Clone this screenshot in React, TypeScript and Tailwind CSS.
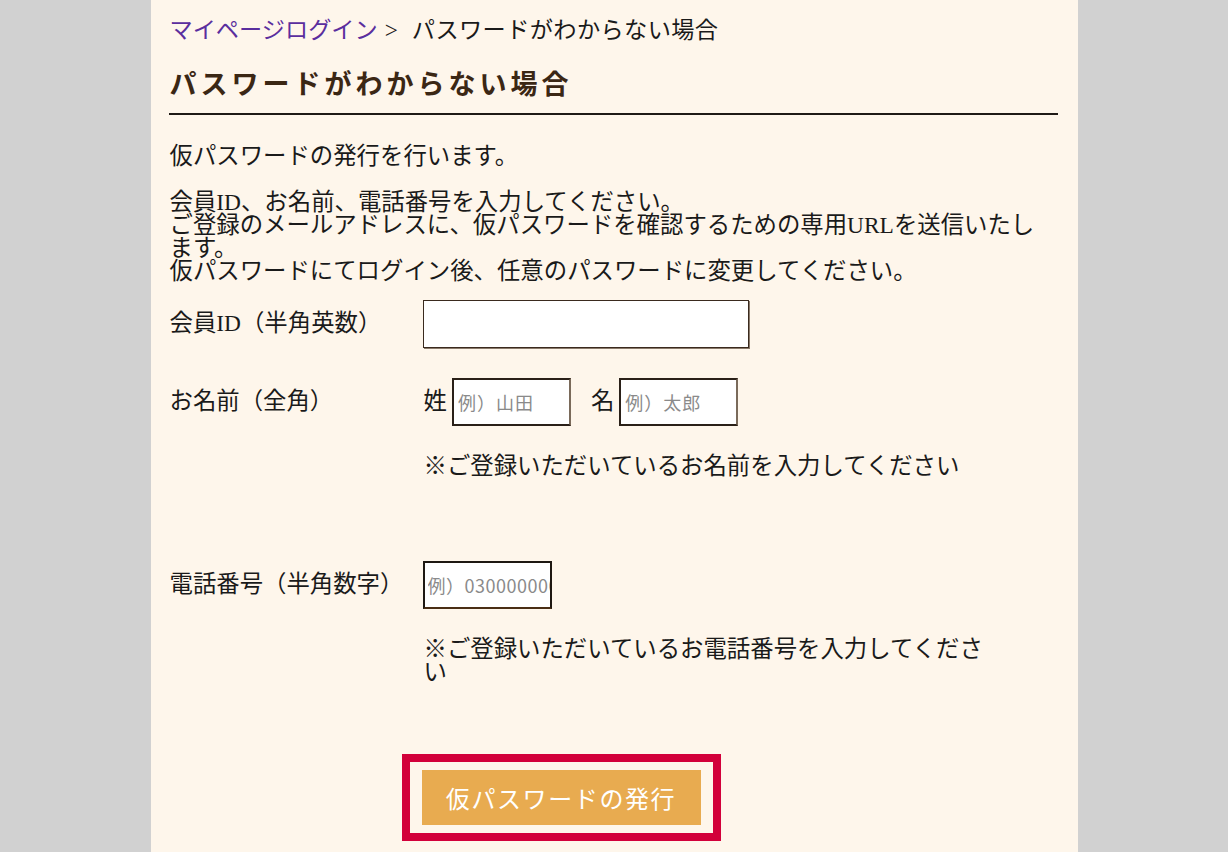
import React from 'react';

const serif = { fontFamily: '"Liberation Serif", "Noto Sans CJK JP", serif' };
const sans = { fontFamily: '"Noto Sans CJK JP", sans-serif' };

export default function App() {
  return (
    <div className="min-h-screen bg-[#d1d1d1]">
      <div
        className="mx-auto w-[927px] min-h-screen bg-[#fef6eb] pl-[18px] pr-[20px] pt-[15px] pb-10 text-[#1a1a1a]"
        style={serif}
      >
        {/* breadcrumb */}
        <div className="text-[23.2px] leading-[30px] pl-[1px]">
          <a className="text-[#5a2e9e]">マイページログイン</a>
          <span className="ml-[7px] mr-[14px]">&gt;</span>
          <span className="tracking-[0.4px]">パスワードがわからない場合</span>
        </div>

        {/* heading */}
        <h1 className="mt-[22px] pb-[10px] border-b-2 border-[#1f1a16] text-[27px] leading-[36px] font-bold tracking-[4px] text-[#3b2714] pl-[1px]">
          パスワードがわからない場合
        </h1>

        <div className="mt-[30px] pl-[1px] text-[23.4px] leading-[23px]">
          <p>仮パスワードの発行を行います。</p>
          <p className="mt-[23px]">
            会員ID、お名前、電話番号を入力してください。
            <br />
            ご登録のメールアドレスに、仮パスワードを確認するための専用URLを送信いたし
            <br />
            ます。
            <br />
            仮パスワードにてログイン後、任意のパスワードに変更してください。
          </p>
        </div>

        {/* form */}
        <div className="mt-[17px] text-[23.4px]">
          <div className="flex items-center">
            <div className="w-[254px] pl-[1px]">会員ID（半角英数）</div>
            <input className="w-[326px] h-[48px] bg-white border border-[#3a2a1e] shadow-[1px_1px_0_#8a7a6a] outline-none" />
          </div>

          <div className="flex items-center mt-[30px]">
            <div className="w-[254px] pl-[1px]">お名前（全角）</div>
            <span className="ml-[1px] mr-[5px]">姓</span>
            <input
              placeholder="例）山田"
              className="w-[119px] h-[48px] px-[4px] bg-white border-2 border-[#2a2018] border-r-[#7a6a5a] text-[18px] tracking-[1px] placeholder:text-[#8a8a8a] outline-none"
              style={sans}
            />
            <span className="ml-[20px] mr-[5px]">名</span>
            <input
              placeholder="例）太郎"
              className="w-[119px] h-[48px] px-[4px] bg-white border-2 border-[#2a2018] border-r-[#7a6a5a] text-[18px] tracking-[1px] placeholder:text-[#8a8a8a] outline-none"
              style={sans}
            />
          </div>

          <div className="ml-[255px] mt-[29px] leading-[23px]">
            ※ご登録いただいているお名前を入力してください
          </div>

          <div className="flex items-center mt-[83px]">
            <div className="w-[254px] pl-[1px]">電話番号（半角数字）</div>
            <input
              placeholder="例）03000000000"
              className="w-[129px] h-[48px] pl-[3px] bg-white border-2 border-[#1e1812] border-b-[#4a2e14] text-[18px] tracking-[0.5px] placeholder:text-[#8a8a8a] outline-none"
              style={sans}
            />
          </div>

          <div className="ml-[255px] mt-[29px] leading-[23px]">
            ※ご登録いただいているお電話番号を入力してくださ
            <br />い
          </div>
        </div>

        {/* submit */}
        <div className="mt-[70px] ml-[233px]">
          <div className="inline-block border-[8px] border-[#d2003a] px-[12px] py-[8px]">
            <button
              className="block w-[279px] h-[55px] bg-[#e8ab50] text-white text-[24px] tracking-[1.6px]"
              style={sans}
            >
              仮パスワードの発行
            </button>
          </div>
        </div>
      </div>
    </div>
  );
}
